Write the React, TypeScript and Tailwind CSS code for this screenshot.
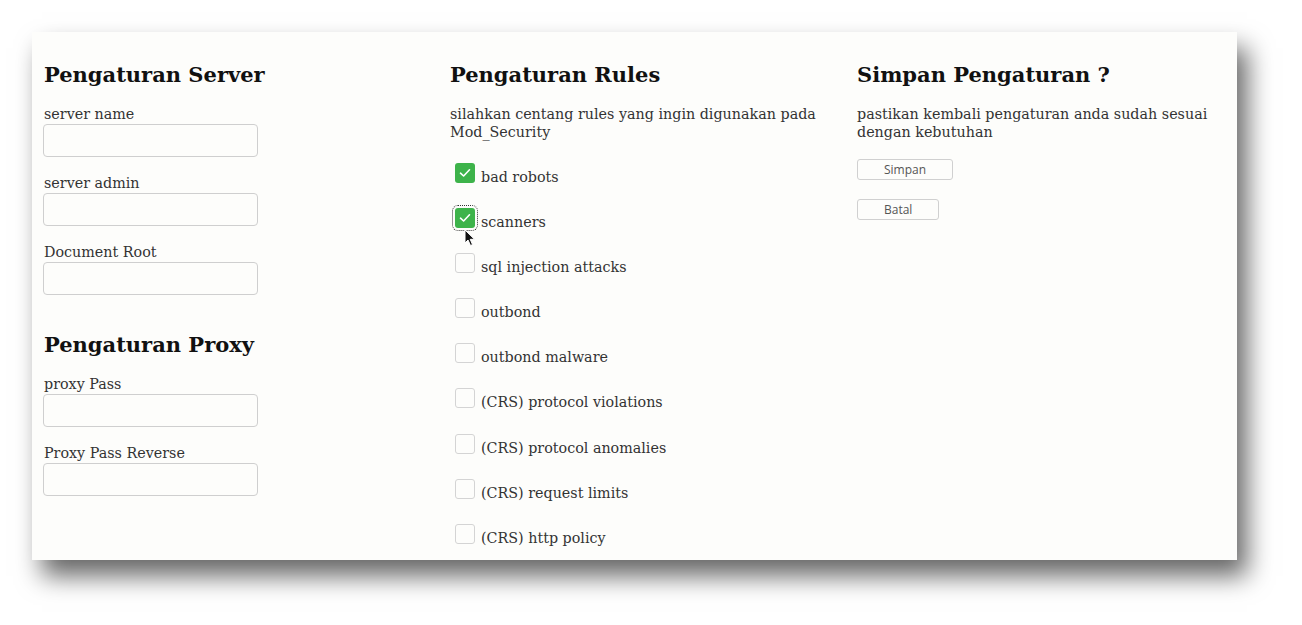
import React from "react";

const serif = "font-['DejaVu_Serif','Liberation_Serif',serif]";

const rules = [
  { label: "bad robots", checked: true },
  { label: "scanners", checked: true, focus: true },
  { label: "sql injection attacks" },
  { label: "outbond" },
  { label: "outbond malware" },
  { label: "(CRS) protocol violations" },
  { label: "(CRS) protocol anomalies" },
  { label: "(CRS) request limits" },
  { label: "(CRS) http policy" },
];

const Field: React.FC<{ label: string }> = ({ label }) => (
  <div className="flex flex-col mb-[16px]">
    <label className="text-[14.3px] leading-[20px] text-[#333]">{label}</label>
    <input
      type="text"
      className="w-[215px] h-[33px] -ml-[1px] rounded-[4px] border border-[#cfcfcf] bg-[#fdfdfb] outline-none"
    />
  </div>
);

const Check: React.FC<{ checked?: boolean; focus?: boolean }> = ({ checked, focus }) => (
  <div
    className={
      (checked
        ? "w-[20px] h-[20px] rounded-[3px] bg-[#3db34a] flex items-center justify-center"
        : "w-[20px] h-[20px] rounded-[3px] border border-[#d4d4d4] bg-[#fdfdfb]") +
      (focus ? " outline outline-1 outline-dotted outline-[#333] outline-offset-[2px]" : "")
    }
  >
    {checked && (
      <svg width="12" height="10" viewBox="0 0 12 10" fill="none">
        <path d="M1.5 5.2 L4.6 8 L10.5 1.8" stroke="white" strokeWidth="1.6" strokeLinecap="round" strokeLinejoin="round" />
      </svg>
    )}
  </div>
);

export default function App() {
  return (
    <div className="w-[1302px] h-[625px] bg-white pt-[32px] pl-[32px] overflow-hidden">
      <div
        className={`relative w-[1205px] h-[528px] bg-[#fdfdfb] shadow-[10px_16px_24px_rgba(0,0,0,0.6)] px-[12px] pt-[29px] grid grid-cols-[406px_407px_1fr] ${serif}`}
      >
        {/* kolom server */}
        <div>
          <h2 className="text-[21px] leading-[28px] font-bold text-[#111] mb-[15px]">Pengaturan Server</h2>
          <Field label="server name" />
          <Field label="server admin" />
          <Field label="Document Root" />
          <h2 className="text-[21px] leading-[28px] font-bold text-[#111] mt-[36px] mb-[15px]">Pengaturan Proxy</h2>
          <Field label="proxy Pass" />
          <Field label="Proxy Pass Reverse" />
        </div>

        {/* kolom rules */}
        <div>
          <h2 className="text-[21px] leading-[28px] font-bold text-[#111] mb-[16px]">Pengaturan Rules</h2>
          <p className="text-[14.3px] leading-[18px] text-[#333] w-[380px]">
            silahkan centang rules yang ingin digunakan pada Mod_Security
          </p>
          <div className="mt-[22px] pl-[5px]">
            {rules.map((r) => (
              <div key={r.label} className="h-[45.1px] flex items-start gap-[6px]">
                <Check checked={r.checked} focus={r.focus} />
                <span className="text-[14.3px] leading-[20px] text-[#333] mt-[4px]">{r.label}</span>
              </div>
            ))}
          </div>
        </div>

        {/* kolom simpan */}
        <div>
          <h2 className="text-[21px] leading-[28px] font-bold text-[#111] mb-[16px]">Simpan Pengaturan ?</h2>
          <p className="text-[14.3px] leading-[18px] text-[#333] w-[370px]">
            pastikan kembali pengaturan anda sudah sesuai dengan kebutuhan
          </p>
          <div className="flex flex-col items-start gap-[19px] mt-[18px] font-['Open_Sans',sans-serif]">
            <button className="h-[21px] px-[26px] rounded-[3px] border border-[#d0d0d0] bg-[#fdfdfb] text-[12px] leading-[18px] text-[#555]">
              Simpan
            </button>
            <button className="h-[21px] px-[26px] rounded-[3px] border border-[#d0d0d0] bg-[#fdfdfb] text-[12px] leading-[18px] text-[#555]">
              Batal
            </button>
          </div>
        </div>

        {/* kursor */}
        <svg className="absolute left-[432px] top-[197px]" width="12" height="18" viewBox="0 0 12 18">
          <path d="M1 1 L1 14 L4 11 L6.5 16.5 L8.5 15.6 L6.2 10.3 L10.5 10.3 Z" fill="#111" stroke="white" strokeWidth="1" />
        </svg>
      </div>
    </div>
  );
}
